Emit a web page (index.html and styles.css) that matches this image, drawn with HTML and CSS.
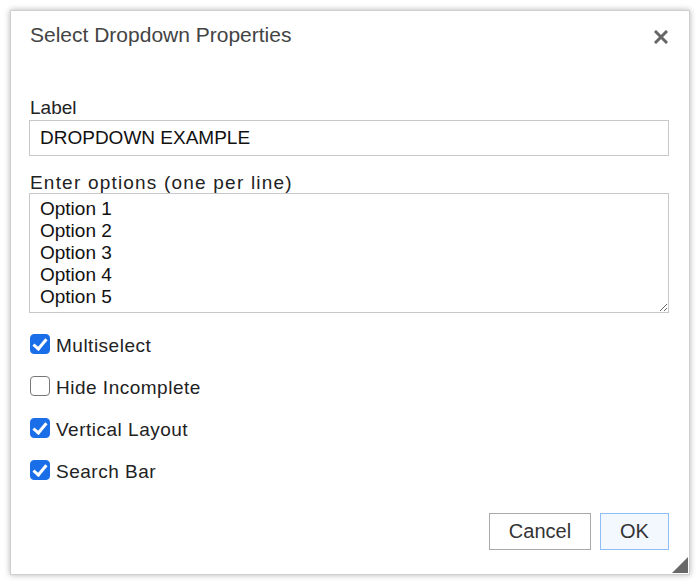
FILE: index.html
```html
<!DOCTYPE html>
<html lang="en">
<head>
    <meta charset="UTF-8">
    <meta name="viewport" content="width=device-width, initial-scale=1.0">
    <title>Select Dropdown Properties</title>
    <link rel="stylesheet" href="styles.css">
</head>
<body>

<div class="dialog">
    <header class="dialog-header">
        <h1>Select Dropdown Properties</h1>
        <button class="close-btn" type="button" aria-label="Close">
            <svg width="14" height="14" viewBox="0 0 14 14">
                <path d="M2 2 L12 12 M12 2 L2 12" stroke="#666" stroke-width="3" stroke-linecap="square" fill="none"/>
            </svg>
        </button>
    </header>

    <form class="dialog-body">
        <label class="field-label" for="label">Label</label>
        <input type="text" id="label" class="text-input" value="DROPDOWN EXAMPLE">

        <label class="field-label options-label" for="options">Enter options (one per line)</label>
        <textarea id="options" class="options-input">Option 1
Option 2
Option 3
Option 4
Option 5</textarea>

        <div class="checks">
            <label class="check"><input type="checkbox" checked><span>Multiselect</span></label>
            <label class="check"><input type="checkbox"><span>Hide Incomplete</span></label>
            <label class="check"><input type="checkbox" checked><span>Vertical Layout</span></label>
            <label class="check"><input type="checkbox" checked><span>Search Bar</span></label>
        </div>
    </form>

    <footer class="dialog-footer">
        <button type="button" class="btn btn-cancel">Cancel</button>
        <button type="button" class="btn btn-ok">OK</button>
    </footer>

    <span class="resize-corner"></span>
</div>

</body>
</html>
```

FILE: styles.css
```css
/* Dialog styles */
body {
    margin: 0;
    padding: 0;
    background-color: #fff;
    font-family: "Liberation Sans", Arial, sans-serif;
    color: #222;
}

.dialog {
    position: relative;
    box-sizing: border-box;
    width: 680px;
    height: 565px;
    margin: 10px;
    padding: 0 20px 24px 18px;
    border: 1px solid #cfcfcf;
    box-shadow: 0 0 6px rgba(0, 0, 0, 0.3);
    background-color: #fff;
    display: flex;
    flex-direction: column;
}

.dialog-header {
    height: 87px;
    display: flex;
    align-items: flex-start;
    justify-content: space-between;
}

.dialog-header h1 {
    margin: 12px 0 0 1px;
    font-size: 21px;
    line-height: 24px;
    font-weight: normal;
    color: #444;
}

.close-btn {
    margin: 19px 1px 0 0;
    padding: 0;
    border: none;
    background: none;
    width: 14px;
    height: 14px;
    cursor: pointer;
}

.close-btn svg {
    display: block;
}

.dialog-body {
    display: flex;
    flex-direction: column;
}

.field-label {
    display: block;
    margin: 0 0 2px 1px;
    font-size: 19px;
    line-height: 20px;
}

.options-label {
    margin-top: 17px;
    margin-bottom: 0;
    letter-spacing: 1.2px;
}

.text-input,
.options-input {
    box-sizing: border-box;
    width: 640px;
    margin: 0;
    border: 1px solid #c8c8c8;
    font-family: "Liberation Sans", Arial, sans-serif;
    font-size: 19px;
    color: #111;
    background-color: #fff;
    outline: none;
}

.text-input {
    height: 36px;
    padding: 0 10px;
}

.options-input {
    height: 120px;
    padding: 4px 10px;
    line-height: 22px;
    resize: both;
}

.checks {
    display: flex;
    flex-direction: column;
    gap: 20px;
    margin-top: 20px;
}

.check {
    display: flex;
    align-items: center;
    gap: 6px;
    height: 22px;
    font-size: 19px;
    letter-spacing: 0.5px;
    color: #222;
}

.check span {
    padding-top: 3px;
}

.check input {
    appearance: none;
    -webkit-appearance: none;
    position: relative;
    box-sizing: border-box;
    width: 20px;
    height: 20px;
    margin: 0 0 0 1px;
    border: 1.5px solid #777;
    border-radius: 4px;
    background-color: #fff;
}

.check input:checked {
    border-color: #1a6fe8;
    background-color: #1a6fe8;
}

.check input:checked::after {
    content: "";
    position: absolute;
    left: 5px;
    top: 1px;
    width: 5px;
    height: 11px;
    border: solid #fff;
    border-width: 0 3px 3px 0;
    transform: rotate(40deg);
}

.dialog-footer {
    margin-top: auto;
    display: flex;
    justify-content: flex-end;
    gap: 9px;
}

.btn {
    height: 37px;
    padding: 0;
    border: 1px solid #aaa;
    background-color: #fff;
    font-family: "Liberation Sans", Arial, sans-serif;
    font-size: 20px;
    color: #333;
    cursor: pointer;
}

.btn-cancel {
    width: 102px;
}

.btn-ok {
    width: 69px;
    border-color: #8fbdf5;
    background-color: #f3f8ff;
}

.resize-corner {
    position: absolute;
    right: 1px;
    bottom: 1px;
    width: 0;
    height: 0;
    border-style: solid;
    border-width: 0 0 16px 16px;
    border-color: transparent transparent #686868 transparent;
}
```
